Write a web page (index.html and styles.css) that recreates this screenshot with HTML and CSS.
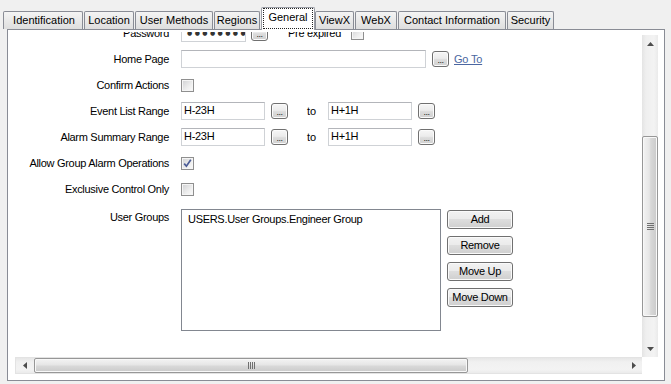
FILE: index.html
```html
<!DOCTYPE html>
<html>
<head>
<meta charset="utf-8">
<link rel="stylesheet" href="styles.css">
</head>
<body>
<div class="win">
  <div class="tabs">
    <div class="tab t-ident">Identification</div>
    <div class="tab t-loc">Location</div>
    <div class="tab t-um">User Methods</div>
    <div class="tab t-reg">Regions</div>
    <div class="tab tab-sel t-gen"><span class="focus">General</span></div>
    <div class="tab t-viewx">ViewX</div>
    <div class="tab t-webx">WebX</div>
    <div class="tab t-contact">Contact Information</div>
    <div class="tab t-sec">Security</div>
  </div>
  <div class="page">
    <div class="scroller">
      <div class="viewport">
        <div class="form">
          <div class="lbl">Password</div>
          <div class="fld">
            <div class="tb tb-pw"><span class="dots">●●●●●●●●</span></div>
            <div class="eb eb-pw"><span>...</span></div>
            <div class="lbl-inline">Pre expired</div>
            <div class="cb cb-pre"></div>
          </div>

          <div class="lbl">Home Page</div>
          <div class="fld">
            <div class="tb tb-home"></div>
            <div class="eb"><span>...</span></div>
            <a class="link">Go To</a>
          </div>

          <div class="lbl">Confirm Actions</div>
          <div class="fld"><div class="cb"></div></div>

          <div class="lbl">Event List Range</div>
          <div class="fld">
            <div class="tb tb-range">H-23H</div>
            <div class="eb"><span>...</span></div>
            <div class="to">to</div>
            <div class="tb tb-range">H+1H</div>
            <div class="eb"><span>...</span></div>
          </div>

          <div class="lbl">Alarm Summary Range</div>
          <div class="fld">
            <div class="tb tb-range">H-23H</div>
            <div class="eb"><span>...</span></div>
            <div class="to">to</div>
            <div class="tb tb-range">H+1H</div>
            <div class="eb"><span>...</span></div>
          </div>

          <div class="lbl">Allow Group Alarm Operations</div>
          <div class="fld">
            <div class="cb"><svg width="11" height="11" viewBox="0 0 11 11"><path d="M2.2 5.6 L4.4 8.2 L8.8 1.8" fill="none" stroke="#4b5c96" stroke-width="1.7"/></svg></div>
          </div>

          <div class="lbl">Exclusive Control Only</div>
          <div class="fld"><div class="cb"></div></div>

          <div class="lbl lbl-top">User Groups</div>
          <div class="fld fld-top">
            <div class="list"><div class="item">USERS.User Groups.Engineer Group</div></div>
            <div class="btns">
              <div class="btn">Add</div>
              <div class="btn">Remove</div>
              <div class="btn">Move Up</div>
              <div class="btn">Move Down</div>
            </div>
          </div>
        </div>
      </div>

      <div class="vscroll">
        <div class="sbtn"><svg width="7" height="4" viewBox="0 0 7 4"><polygon points="0,4 7,4 3.5,0" fill="#4d4d4d"/></svg></div>
        <div class="vspace-a"></div>
        <div class="vthumb"><div class="vgrip"></div></div>
        <div class="vspace-b"></div>
        <div class="sbtn"><svg width="7" height="4" viewBox="0 0 7 4"><polygon points="0,0 7,0 3.5,4" fill="#4d4d4d"/></svg></div>
      </div>

      <div class="hscroll">
        <div class="hbtn"><svg width="4" height="7" viewBox="0 0 4 7"><polygon points="4,0 4,7 0,3.5" fill="#4d4d4d"/></svg></div>
        <div class="hthumb"><div class="hgrip"></div></div>
        <div class="hspace"></div>
        <div class="hbtn"><svg width="4" height="7" viewBox="0 0 4 7"><polygon points="0,0 0,7 4,3.5" fill="#4d4d4d"/></svg></div>
      </div>
      <div class="corner"></div>
    </div>
  </div>
</div>
</body>
</html>
```
FILE: styles.css
```css
* { box-sizing: border-box; }
html, body { margin: 0; padding: 0; }
body {
  background: #f0f0f0;
  width: 671px;
  height: 384px;
  overflow: hidden;
  font-family: "Liberation Sans", Arial, sans-serif;
  font-size: 11px;
  color: #000;
}
.win { padding-top: 7px; }

/* tabs */
.tabs {
  display: flex;
  align-items: flex-end;
  height: 22px;
  padding-left: 3px;
}
.tab {
  height: 18px;
  border: 1px solid #898c95;
  border-bottom: none;
  border-radius: 2px 2px 0 0;
  background: linear-gradient(#f4f4f4, #e9e9e9 50%, #dedede);
  line-height: 17px;
  text-align: center;
  white-space: nowrap;
  margin-left: 1px;
}
.tab:first-child { margin-left: 0; }
.t-ident { width: 80px; padding-left: 2px; }
.t-loc { width: 50px; }
.t-um { width: 78px; }
.t-reg { width: 46px; }
.t-gen { width: 54px; }
.t-viewx { width: 39px; margin-left: 0; }
.t-webx { width: 42px; }
.t-contact { width: 108px; }
.t-sec { width: 47px; }
.tab-sel {
  height: 23px;
  margin-bottom: -1px;
  position: relative;
  z-index: 1;
  background: #fff;
  border-color: #9a9da5;
  padding: 0 1px 1px 1px;
}
.focus {
  display: block;
  height: 21px;
  border: 1px dotted #222;
  line-height: 16px;
}

/* page */
.page {
  margin-left: 7px;
  width: 658px;
  height: 352px;
  border: 1px solid #898c95;
  background: #fff;
  padding: 2px 6px 6px 7px;
}
.scroller {
  display: grid;
  grid-template-columns: 1fr 16px;
  grid-template-rows: 325px 17px;
  height: 342px;
}
.viewport {
  overflow: hidden;
  background: #fff;
}

/* form */
.form {
  margin-top: -12px;
  display: grid;
  grid-template-columns: 154px auto;
  grid-template-rows: repeat(7, 26px) auto;
  column-gap: 12px;
  align-items: center;
}
.lbl {
  text-align: right;
  letter-spacing: -0.3px;
  white-space: nowrap;
  line-height: 13px;
}
.lbl-top { align-self: start; padding-top: 9px; }
.fld { display: flex; align-items: center; }
.fld-top { align-self: start; align-items: flex-start; margin-top: 7px; }

.tb {
  height: 18px;
  border: 1px solid #cfd2d6;
  border-top-color: #b3b5ba;
  background: #fff;
  padding: 0 2px;
  line-height: 14px;
  letter-spacing: -0.3px;
  white-space: nowrap;
  overflow: hidden;
}
.tb-pw { width: 65px; }
.tb-home { width: 245px; }
.tb-range { width: 84px; }
.dots {
  font-size: 6px;
  letter-spacing: 2.4px;
  font-family: "DejaVu Sans", sans-serif;
  padding-left: 3px;
  color: #333;
  vertical-align: 1px;
}

.eb {
  width: 17px;
  height: 16px;
  margin-left: 6px;
  border: 1px solid #707070;
  border-radius: 3px;
  background: linear-gradient(#f6f6f6, #ececec 45%, #dcdcdc 55%, #d0d0d0);
  box-shadow: inset 0 0 0 1px #fbfbfb;
  display: flex;
  justify-content: center;
  align-items: flex-end;
  font-size: 9px;
  line-height: 9px;
  letter-spacing: -0.5px;
  color: #222;
  padding-bottom: 1px;
}
.eb-pw { margin-left: 5px; }
.lbl-inline { margin-left: 20px; letter-spacing: -0.3px; white-space: nowrap; }
.cb-pre { margin-left: 10px; }
.link {
  margin-left: 5px;
  color: #4b67a1;
  text-decoration: underline;
  letter-spacing: -0.2px;
}
.to { margin-left: 19px; margin-right: 12px; width: 9px; }

.cb {
  width: 13px;
  height: 13px;
  border: 1px solid #8f8f8f;
  background: linear-gradient(135deg, #cfd0d2, #eeeeee 60%, #fbfbfb);
  box-shadow: inset 0 0 0 1px #f5f5f5;
  display: flex;
  align-items: center;
  justify-content: center;
}
.cb svg { display: block; }

.list {
  width: 260px;
  height: 122px;
  border: 1px solid #828790;
  background: #fff;
  padding: 3px 6px;
}
.item { line-height: 13px; letter-spacing: -0.3px; white-space: nowrap; }
.btns {
  margin-left: 6px;
  margin-top: 1px;
  display: flex;
  flex-direction: column;
  gap: 7px;
}
.btn {
  width: 66px;
  height: 19px;
  border: 1px solid #707070;
  border-radius: 3px;
  background: linear-gradient(#f2f2f2, #ebebeb 45%, #dddddd 50%, #cfcfcf);
  box-shadow: inset 0 0 0 1px #fafafa;
  text-align: center;
  line-height: 17px;
  letter-spacing: -0.3px;
  white-space: nowrap;
}

/* scrollbars */
.vscroll {
  margin-top: 3px;
  display: flex;
  flex-direction: column;
  background: linear-gradient(90deg, #e4e4e4, #efefef 25%, #f3f3f3 75%, #eaeaea);
}
.sbtn {
  height: 17px;
  display: flex;
  align-items: center;
  justify-content: center;
}
.vspace-a { height: 84px; }
.vthumb {
  height: 181px;
  border: 1px solid #979797;
  border-radius: 2px;
  background: linear-gradient(90deg, #f3f3f3, #e6e6e6 45%, #d8d8d8 55%, #cacaca);
  box-shadow: inset 0 0 0 1px #f8f8f8;
  display: flex;
  align-items: center;
  justify-content: center;
}
.vgrip {
  width: 7px;
  height: 7px;
  background: repeating-linear-gradient(#707070 0 1px, transparent 1px 2px);
}
.vspace-b { flex: 1; }

.hscroll {
  display: flex;
  border: 1px solid #e3e3e3;
  border-right: none;
  background: linear-gradient(#e6e6e6, #f0f0f0 25%, #f3f3f3 75%, #ebebeb);
}
.hbtn {
  width: 17px;
  display: flex;
  align-items: center;
  justify-content: center;
}
.hthumb {
  width: 434px;
  margin-left: 1px;
  border: 1px solid #979797;
  border-radius: 2px;
  background: linear-gradient(#f3f3f3, #e6e6e6 45%, #d8d8d8 55%, #cacaca);
  box-shadow: inset 0 0 0 1px #f8f8f8;
  display: flex;
  align-items: center;
  justify-content: center;
}
.hgrip {
  width: 7px;
  height: 7px;
  background: repeating-linear-gradient(90deg, #707070 0 1px, transparent 1px 2px);
}
.hspace { flex: 1; }
.corner { background: #fff; }
```
